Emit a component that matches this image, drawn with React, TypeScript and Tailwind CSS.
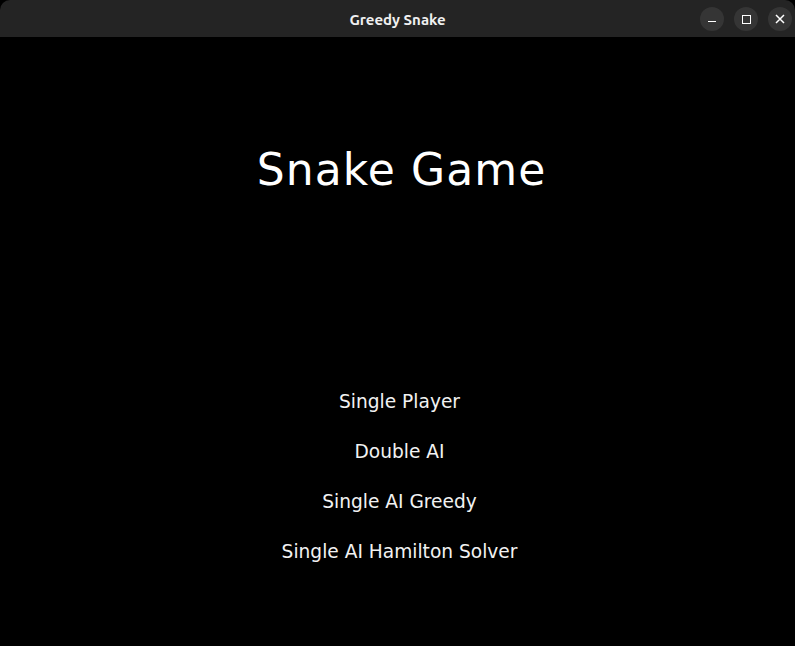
export default function App() {
  const modes = ["Single Player", "Double AI", "Single AI Greedy", "Single AI Hamilton Solver"];

  return (
    <div className="w-[795px] h-[646px] bg-black overflow-hidden flex flex-col">
      {/* window title bar */}
      <div className="relative h-[37px] shrink-0 bg-[#242424] rounded-t-[10px] flex items-center justify-center">
        <span className="mt-[3px] text-[15px] font-bold text-[#f0f0f0] font-['Ubuntu','Open_Sans',sans-serif]">
          Greedy Snake
        </span>
        <div className="absolute right-[3px] top-[7px] flex gap-[10px]">
          <button className="w-6 h-6 rounded-full bg-[#353535] flex items-center justify-center">
            <span className="block w-[8px] h-[1.5px] bg-white mt-[5px]" />
          </button>
          <button className="w-6 h-6 rounded-full bg-[#353535] flex items-center justify-center">
            <span className="block w-[9px] h-[9px] border-[1.5px] border-white" />
          </button>
          <button className="w-6 h-6 rounded-full bg-[#353535] flex items-center justify-center">
            <svg width="10" height="10" viewBox="0 0 10 10" stroke="white" strokeWidth="1.5">
              <path d="M1 1L9 9M9 1L1 9" />
            </svg>
          </button>
        </div>
      </div>

      {/* game menu */}
      <div className="flex-1 flex flex-col items-center text-white font-['DejaVu_Sans',sans-serif]">
        <h1 className="mt-[111px] ml-[8px] text-[44px] leading-none tracking-[1.1px] font-normal">Snake Game</h1>
        <ul className="mt-[198px] ml-[4px] flex flex-col items-center gap-[26px]">
          {modes.map((m) => (
            <li key={m} className="text-[18.6px] leading-[24px] text-[#f2f2f2]">
              {m}
            </li>
          ))}
        </ul>
      </div>
    </div>
  );
}
